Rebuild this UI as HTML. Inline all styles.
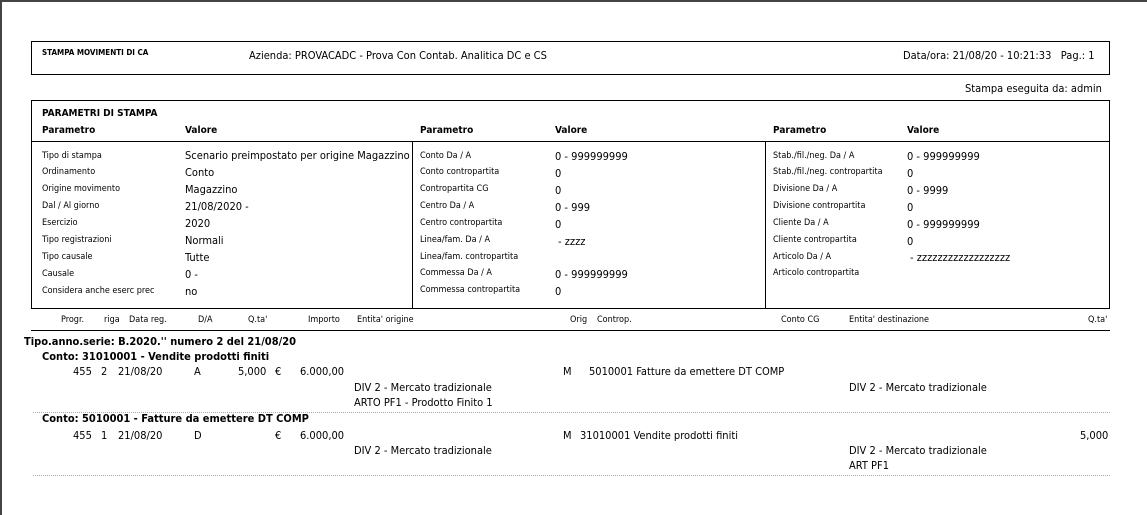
<!DOCTYPE html>
<html><head><meta charset="utf-8"><style>
body{margin:0;width:1147px;height:515px;background:#fff;position:relative;overflow:hidden;font-family:"DejaVu Sans Condensed","Liberation Sans",sans-serif;color:#000}
.t{position:absolute;white-space:nowrap;line-height:14px}
.s{font-size:9px}
.m{font-size:11px}
.b{font-weight:bold}
.box{position:absolute;border:1px solid #000}
.hl{position:absolute;height:1px;background:#000}
.dl{position:absolute;height:0;border-top:1px dotted #aaa}
</style></head><body>
<div style="position:absolute;left:0;top:0;width:1147px;height:2px;background:#444"></div>
<div style="position:absolute;left:0;top:0;width:2px;height:515px;background:#444"></div>

<div class="box" style="left:31px;top:41px;width:1077px;height:32px"></div>
<div class="t s b" style="left:42px;top:46px;font-size:8px">STAMPA MOVIMENTI DI CA</div>
<div class="t m" style="left:249px;top:49px">Azienda: PROVACADC - Prova Con Contab. Analitica DC e CS</div>
<div class="t m" style="left:903px;top:49px">Data/ora: 21/08/20 - 10:21:33&nbsp;&nbsp; Pag.: 1</div>
<div class="t m" style="left:965px;top:82px">Stampa eseguita da: admin</div>

<div class="box" style="left:31px;top:100px;width:1077px;height:207px"></div>
<div class="hl" style="left:31px;top:141px;width:1079px"></div>
<div style="position:absolute;left:412px;top:141px;width:1px;height:167px;background:#000"></div>
<div style="position:absolute;left:765px;top:141px;width:1px;height:167px;background:#000"></div>
<div class="t b" style="left:42px;top:107px;font-size:10px">PARAMETRI DI STAMPA</div>
<div class="t b" style="left:42px;top:124px;font-size:10px">Parametro</div>
<div class="t b" style="left:185px;top:124px;font-size:10px">Valore</div>
<div class="t b" style="left:420px;top:124px;font-size:10px">Parametro</div>
<div class="t b" style="left:555px;top:124px;font-size:10px">Valore</div>
<div class="t b" style="left:773px;top:124px;font-size:10px">Parametro</div>
<div class="t b" style="left:907px;top:124px;font-size:10px">Valore</div>

<div class="t s" style="left:42px;top:149px">Tipo di stampa</div><div class="t m" style="left:185px;top:149px">Scenario preimpostato per origine Magazzino</div>
<div class="t s" style="left:42px;top:165px">Ordinamento</div><div class="t m" style="left:185px;top:166px">Conto</div>
<div class="t s" style="left:42px;top:182px">Origine movimento</div><div class="t m" style="left:185px;top:183px">Magazzino</div>
<div class="t s" style="left:42px;top:199px">Dal / Al giorno</div><div class="t m" style="left:185px;top:200px">21/08/2020 -</div>
<div class="t s" style="left:42px;top:216px">Esercizio</div><div class="t m" style="left:185px;top:217px">2020</div>
<div class="t s" style="left:42px;top:233px">Tipo registrazioni</div><div class="t m" style="left:185px;top:234px">Normali</div>
<div class="t s" style="left:42px;top:250px">Tipo causale</div><div class="t m" style="left:185px;top:251px">Tutte</div>
<div class="t s" style="left:42px;top:267px">Causale</div><div class="t m" style="left:185px;top:268px">0 -</div>
<div class="t s" style="left:42px;top:284px">Considera anche eserc prec</div><div class="t m" style="left:185px;top:285px">no</div>

<div class="t s" style="left:420px;top:149px">Conto Da / A</div><div class="t m" style="left:555px;top:150px">0 - 999999999</div>
<div class="t s" style="left:420px;top:165px">Conto contropartita</div><div class="t m" style="left:555px;top:167px">0</div>
<div class="t s" style="left:420px;top:182px">Contropartita CG</div><div class="t m" style="left:555px;top:184px">0</div>
<div class="t s" style="left:420px;top:199px">Centro Da / A</div><div class="t m" style="left:555px;top:201px">0 - 999</div>
<div class="t s" style="left:420px;top:216px">Centro contropartita</div><div class="t m" style="left:555px;top:218px">0</div>
<div class="t s" style="left:420px;top:233px">Linea/fam. Da / A</div><div class="t m" style="left:558px;top:235px">- zzzz</div>
<div class="t s" style="left:420px;top:250px">Linea/fam. contropartita</div>
<div class="t s" style="left:420px;top:266px">Commessa Da / A</div><div class="t m" style="left:555px;top:268px">0 - 999999999</div>
<div class="t s" style="left:420px;top:283px">Commessa contropartita</div><div class="t m" style="left:555px;top:285px">0</div>

<div class="t s" style="left:773px;top:149px">Stab./fil./neg. Da / A</div><div class="t m" style="left:907px;top:150px">0 - 999999999</div>
<div class="t s" style="left:773px;top:165px">Stab./fil./neg. contropartita</div><div class="t m" style="left:907px;top:167px">0</div>
<div class="t s" style="left:773px;top:182px">Divisione Da / A</div><div class="t m" style="left:907px;top:184px">0 - 9999</div>
<div class="t s" style="left:773px;top:199px">Divisione contropartita</div><div class="t m" style="left:907px;top:201px">0</div>
<div class="t s" style="left:773px;top:216px">Cliente Da / A</div><div class="t m" style="left:907px;top:218px">0 - 999999999</div>
<div class="t s" style="left:773px;top:233px">Cliente contropartita</div><div class="t m" style="left:907px;top:235px">0</div>
<div class="t s" style="left:773px;top:250px">Articolo Da / A</div><div class="t m" style="left:910px;top:251px">- zzzzzzzzzzzzzzzzzz</div>
<div class="t s" style="left:773px;top:266px">Articolo contropartita</div>

<div class="t s" style="left:61px;top:313px">Progr.</div>
<div class="t s" style="left:104px;top:313px">riga</div>
<div class="t s" style="left:129px;top:313px">Data reg.</div>
<div class="t s" style="left:198px;top:313px">D/A</div>
<div class="t s" style="left:248px;top:313px">Q.ta'</div>
<div class="t s" style="left:308px;top:313px">Importo</div>
<div class="t s" style="left:357px;top:313px">Entita' origine</div>
<div class="t s" style="left:570px;top:313px">Orig</div>
<div class="t s" style="left:597px;top:313px">Controp.</div>
<div class="t s" style="left:781px;top:313px">Conto CG</div>
<div class="t s" style="left:849px;top:313px">Entita' destinazione</div>
<div class="t s" style="left:1088px;top:313px">Q.ta'</div>
<div class="hl" style="left:31px;top:330px;width:1079px"></div>

<div class="t m b" style="left:24px;top:335px">Tipo.anno.serie: B.2020.'' numero 2 del 21/08/20</div>
<div class="t m b" style="left:42px;top:350px">Conto: 31010001 - Vendite prodotti finiti</div>
<div class="t m" style="left:73px;top:365px">455</div>
<div class="t m" style="left:101px;top:365px">2</div>
<div class="t m" style="left:118px;top:365px">21/08/20</div>
<div class="t m" style="left:194px;top:365px">A</div>
<div class="t m" style="left:238px;top:365px">5,000</div>
<div class="t m" style="left:275px;top:365px">€</div>
<div class="t m" style="left:300px;top:365px">6.000,00</div>
<div class="t m" style="left:563px;top:365px">M</div>
<div class="t m" style="left:589px;top:365px">5010001 Fatture da emettere DT COMP</div>
<div class="t m" style="left:354px;top:381px">DIV 2 - Mercato tradizionale</div>
<div class="t m" style="left:849px;top:381px">DIV 2 - Mercato tradizionale</div>
<div class="t m" style="left:354px;top:396px">ARTO PF1 - Prodotto Finito 1</div>
<div class="dl" style="left:33px;top:412px;width:1077px"></div>

<div class="t m b" style="left:42px;top:412px">Conto: 5010001 - Fatture da emettere DT COMP</div>
<div class="t m" style="left:73px;top:429px">455</div>
<div class="t m" style="left:101px;top:429px">1</div>
<div class="t m" style="left:118px;top:429px">21/08/20</div>
<div class="t m" style="left:194px;top:429px">D</div>
<div class="t m" style="left:275px;top:429px">€</div>
<div class="t m" style="left:300px;top:429px">6.000,00</div>
<div class="t m" style="left:563px;top:429px">M</div>
<div class="t m" style="left:580px;top:429px">31010001 Vendite prodotti finiti</div>
<div class="t m" style="left:1080px;top:429px">5,000</div>
<div class="t m" style="left:354px;top:444px">DIV 2 - Mercato tradizionale</div>
<div class="t m" style="left:849px;top:444px">DIV 2 - Mercato tradizionale</div>
<div class="t m" style="left:849px;top:459px">ART PF1</div>
<div class="dl" style="left:33px;top:475px;width:1077px"></div>
</body></html>
